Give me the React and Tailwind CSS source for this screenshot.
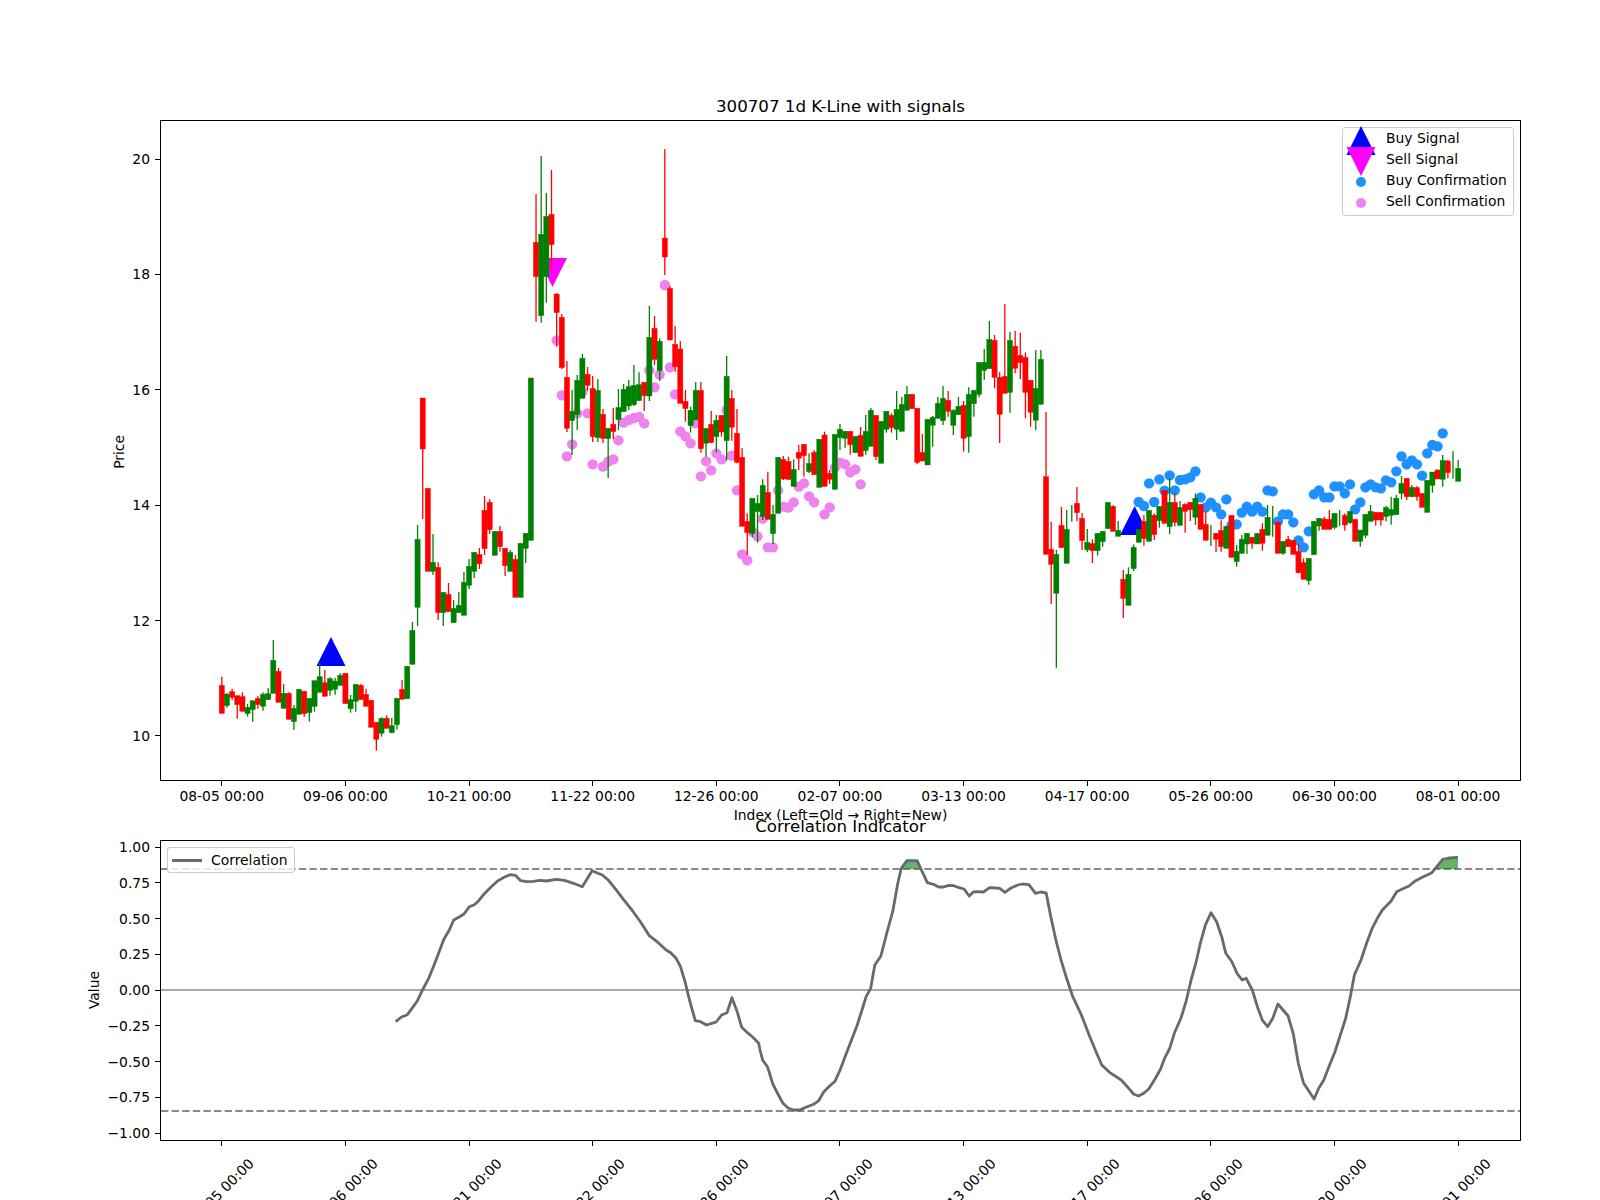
import React from 'react';

// x position of candle i in page pixels
const xOf = (i) => 221.8 + 5.1515 * i;

// Prices were read per crop, so each group has its own y origin (3 units = 1px)
const candleGroups = [
  { y0: 450, rows: [
    'r 680 706 790 790', 'g 730 732 767 773', 'r 716 725 742 750', 'r 737 737 764 806', 'r 727 740 784 784',
    'g 762 772 791 800', 'g 752 752 779 815', 'r 738 745 764 776', 'g 727 733 769 782', 'g 714 731 749 749',
    'g 570 631 730 730', 'r 654 664 757 757', 'g 702 730 775 775', 'r 727 730 808 808', 'g 765 775 815 840',
    'g 718 718 793 793', 'r 722 724 791 800', 'g 745 745 788 815', 'g 692 692 769 785', 'g 640 680 727 727',
    'r 660 698 739 739', 'g 682 686 721 737', 'g 683 693 718 734', 'g 670 676 706 706', 'r 670 670 761 761',
    'g 735 749 776 788', 'g 703 703 754 785', 'r 702 706 749 749', 'r 716 733 769 769', 'r 751 751 832 832',
    'r 817 817 868 902', 'g 802 805 850 860', 'r 796 805 835 835', 'g 803 827 848 850', 'g 745 745 824 839',
    'r 690 718 748 748', 'g 649 649 746 746', 'g 516 541 643 643', 'g 225 268 472 528', 'r -156 -156 -3 207',
    'r 115 115 364 364', 'g 252 337 364 375', 'r 337 352 488 510', 'g 427 427 488 528', 'r 399 433 485 485',
    'g 450 475 518 518', 'g 426 466 488 488', 'g 366 397 496 496', 'g 327 349 406 417', 'g 307 307 364 384',
    'r 294 313 341 357', 'r 138 181 296 315', 'r 148 157 239 252', 'g 244 244 316 316', 'r 228 244 290 305',
    'r 295 295 347 378', 'g 300 307 364 364', 'r 315 328 442 442', 'g 280 280 442 442', 'g 250 250 295 339',
    'g -216 -216 271 271',
  ] },
  { y0: 120, rows: [
    'r 222 367 470 605', 'g 108 343 587 608', 'g 219 289 470 548', 'r 150 283 374 446',
  ] },
  { y0: 280, rows: [
    'r 40 42 98 200', 'r 102 112 263 267', 'r 243 292 445 456', 'g 330 394 422 525', 'g 285 301 404 450',
    'g 222 235 355 355', 'r 261 283 316 332', 'r 288 325 470 486', 'g 297 331 473 486', 'r 387 403 475 489',
    'g 445 445 476 594', 'r 384 433 455 478', 'g 327 382 419 450', 'g 312 328 395 395', 'g 300 320 378 390',
    'g 255 316 374 378', 'g 277 314 362 362', 'r 307 307 347 393', 'g 78 172 348 363', 'r 108 145 238 255',
    'g 175 184 272 303', 'r -393 -126 -69 -15', 'r 18 25 180 180', 'r 138 193 260 275', 'r 183 207 370 370',
    'r 330 364 386 425', 'g 380 391 437 458', 'g 306 331 420 420', 'r 306 331 506 518', 'g 445 445 490 530',
    'r 393 433 488 490', 'g 405 421 470 517', 'r 406 406 456 470', 'g 228 289 482 542', 'r 330 355 442 482',
    'r 387 460 547 550', 'r 505 532 739 739', 'r 700 724 758 825', 'g 655 655 760 772', 'g 645 670 695 788',
    'g 598 616 710 720', 'r 575 637 718 718', 'g 675 703 761 792', 'g 532 532 700 700', 'r 528 538 597 600',
    'r 530 544 598 600', 'g 538 568 619 619', 'r 495 517 535 570', 'r 493 493 527 590', 'g 520 550 575 580',
    'r 510 517 584 584', 'g 478 478 622 622', 'r 455 465 619 619',
  ] },
  { y0: 280, rows: [
    'r 570 580 598 612', 'g 463 463 628 628', 'g 432 448 473 510', 'g 454 454 475 503', 'r 454 454 494 524',
    'g 469 469 518 518', 'r 441 466 529 529', 'g 405 454 512 524', 'g 384 391 499 499', 'r 406 406 530 540',
    'g 424 424 550 550', 'g 394 394 448 458', 'r 400 406 443 458', 'g 333 388 448 480', 'g 351 373 454 454',
    'g 318 343 391 391', 'r 343 343 386 386', 'r 385 385 547 553', 'r 462 517 543 543', 'g 418 418 555 555',
    'g 408 412 436 500', 'g 350 370 415 415', 'g 318 355 422 435', 'r 333 361 394 410', 'g 388 391 436 465',
    'g 351 379 404 404', 'r 363 376 475 515', 'g 322 343 470 518', 'g 331 331 371 410', 'g 247 247 343 352',
    'g 207 247 271 300', 'g 123 178 266 266', 'r 165 181 292 325', 'r 277 292 403 489', 'r 72 289 340 340',
    'g 156 181 337 398', 'r 153 199 265 280', 'r 158 226 248 297', 'r 217 232 337 415', 'r 301 301 397 440',
    'g 210 325 421 450', 'g 210 238 373 373',
  ] },
  { y0: 400, rows: [
    'r 36 230 463 463', 'r 366 448 493 612', 'g 450 463 580 803', 'r 321 376 443 443', 'g 330 388 490 490',
    'g 315 340 340 365', 'r 261 310 338 363', 'r 339 355 422 450', 'g 387 427 449 456', 'r 418 431 452 489',
    'g 400 400 452 467', 'g 394 394 425 440', 'g 307 307 386 386', 'r 316 319 394 394', 'g 363 391 409 409',
    'r 510 538 595 654', 'g 502 523 616 616', 'g 433 442 506 513', 'g 388 388 427 427', 'r 345 364 416 437',
    'g 331 331 424 424', 'r 340 346 404 420', 'g 319 319 362 383', 'r 271 271 370 370', 'g 235 307 380 402',
    'r 280 307 367 379', 'g 303 322 376 376', 'r 310 313 334 398', 'r 307 307 329 363', 'g 280 295 352 375',
    'r 313 313 388 388', 'r 333 373 421 421', 'g 375 406 406 438', 'r 400 400 418 456', 'r 361 391 440 455',
    'g 379 379 445 445', 'r 346 346 472 472',
  ] },
  { y0: 120, rows: [
    'g 1275 1294 1325 1340', 'g 1245 1258 1300 1300', 'g 1240 1240 1272 1302', 'r 1252 1252 1270 1286', 'g 1240 1240 1272 1272',
    'r 1210 1228 1270 1292', 'g 1155 1192 1246 1246', 'g 1158 1204 1204 1250', 'r 1206 1206 1300 1300', 'g 1264 1264 1300 1304',
    'r 1248 1258 1280 1280', 'r 1261 1261 1303 1303', 'r 1272 1294 1358 1360', 'r 1315 1328 1378 1378', 'g 1315 1315 1382 1394',
    'g 1204 1204 1304 1304', 'g 1195 1195 1218 1232', 'r 1190 1197 1228 1228', 'r 1170 1198 1228 1228', 'g 1180 1180 1222 1228',
    'g 1170 1194 1194 1218', 'r 1180 1186 1215 1232', 'g 1174 1174 1208 1212', 'r 1198 1198 1264 1264', 'g 1230 1230 1264 1280',
    'g 1183 1183 1246 1254', 'g 1155 1174 1204 1204', 'r 1177 1177 1200 1217', 'r 1177 1177 1200 1217', 'g 1158 1162 1190 1204',
    'g 1130 1168 1186 1214', 'g 1125 1135 1184 1184', 'g 1068 1090 1120 1138', 'r 1075 1075 1130 1140', 'g 1095 1102 1130 1132',
    'r 1098 1103 1130 1142', 'r 1120 1120 1162 1162', 'g 1081 1081 1177 1177', 'g 1056 1056 1096 1118', 'r 1048 1050 1077 1077',
    'g 1005 1021 1078 1100', 'r 1020 1023 1058 1075', 'g 993 1035 1035 1076', 'g 1020 1045 1084 1084',
  ] },
];

const candles = candleGroups.flatMap(({ y0, rows }) =>
  rows.map((row) => {
    const [color, ...ys] = row.split(' ');
    const [wickTop, bodyTop, bodyBottom, wickBottom] = ys.map((v) => y0 + Number(v) / 3);
    return { color: color === 'r' ? '#ff0000' : '#008000', wickTop, bodyTop, bodyBottom, wickBottom };
  })
);

// [candle index, y] pairs, y in crop units
const sellDots = [
  [65, 181], [66, 346], [67, 529], [68, 493], [69, 400], [70, 335], [71, 400], [72, 553], [74, 560], [75, 545],
  [76, 538], [77, 481], [78, 428], [79, 420], [80, 414], [81, 411], [82, 430], [83, 271], [84, 322], [85, 284],
  [86, 15], [87, 262], [88, 343], [89, 454], [90, 469], [91, 490], [92, 430], [93, 589], [94, 544], [95, 571],
  [96, 520], [97, 538], [98, 390], [99, 527], [100, 631], [101, 823], [102, 841], [103, 755], [104, 769], [105, 716],
  [106, 802], [107, 802], [108, 631], [109, 680], [110, 683], [111, 667], [112, 620], [113, 610], [114, 649], [115, 667],
  [117, 703], [118, 682], [119, 563], [120, 548], [121, 553], [122, 577], [123, 568], [124, 613],
].map(([i, y]) => [xOf(i), 280 + y / 3]);

const buyDots = [
  ...[
    [178, 306], [179, 318], [180, 250], [181, 306], [182, 238], [183, 272], [184, 226], [185, 271], [186, 240], [187, 238],
    [188, 232], [189, 214], [190, 292], [191, 322], [192, 308], [193, 322], [194, 343], [195, 298], [196, 376],
  ].map(([i, y]) => [xOf(i), 400 + y / 3]),
  ...[
    [197, 1213], [198, 1178], [199, 1160], [200, 1175], [201, 1160], [202, 1175], [203, 1111], [204, 1114], [205, 1204], [206, 1183],
    [207, 1183], [208, 1207], [209, 1261], [210, 1282], [211, 1234], [212, 1123], [213, 1111], [214, 1132], [215, 1132], [216, 1099],
    [217, 1099], [218, 1120], [219, 1093], [220, 1168], [221, 1147], [222, 1102], [223, 1093], [224, 1102], [225, 1105], [226, 1081],
    [227, 1087], [228, 1054], [229, 1009], [230, 1033], [231, 1021], [232, 1033], [233, 1067], [234, 1000], [235, 975], [236, 979],
    [237, 940],
  ].map(([i, y]) => [xOf(i), 120 + y / 3]),
];

const corrLeft = [
  [752, 755], [765, 741], [778, 734], [788, 716], [800, 694], [812, 660], [826, 625], [838, 585], [848, 550], [860, 508],
  [872, 480], [882, 450], [895, 440], [905, 432], [917, 410], [928, 404], [938, 392], [950, 372], [965, 352], [980, 333],
  [995, 322], [1008, 314], [1020, 316], [1032, 332], [1045, 335], [1060, 334], [1075, 331], [1090, 333], [1112, 328], [1130, 331],
  [1150, 340], [1170, 350], [1192, 302], [1205, 310], [1215, 315], [1228, 330], [1245, 358], [1262, 388], [1280, 418], [1300, 455],
  [1320, 497], [1340, 518], [1358, 540], [1368, 548], [1380, 565], [1390, 590], [1400, 635], [1410, 690], [1423, 752], [1435, 755],
  [1448, 765], [1460, 760], [1470, 756], [1482, 735], [1494, 728], [1505, 683], [1517, 725], [1527, 772], [1540, 788], [1552, 802],
  [1565, 820],
].map(([x, y]) => [60 + x / 2.24, 770 + y / 3]);

const corrRight = [
  [0, 840], [5, 870], [15, 892], [25, 942], [35, 972], [45, 1000], [55, 1014], [65, 1020], [78, 1020], [90, 1012],
  [105, 1003], [115, 992], [125, 965], [135, 950], [147, 934], [157, 900], [168, 855], [178, 815], [190, 768], [200, 720],
  [208, 680], [217, 655], [225, 585], [237, 558], [250, 480], [260, 425], [270, 340], [277, 295], [288, 272], [308, 272],
  [315, 295], [328, 338], [340, 343], [350, 351], [360, 351], [370, 346], [380, 347], [390, 353], [400, 357], [410, 378],
  [418, 366], [428, 365], [438, 366], [450, 353], [462, 354], [470, 355], [480, 367], [492, 354], [505, 345], [515, 342],
  [527, 344], [540, 370], [550, 366], [561, 369], [570, 440], [580, 510], [590, 570], [600, 620], [613, 680], [630, 735],
  [645, 795], [660, 850], [670, 885], [685, 907], [708, 930], [720, 950], [732, 972], [742, 978], [752, 970], [762, 957],
  [775, 925], [785, 898], [793, 865], [803, 835], [812, 790], [825, 745], [835, 695], [845, 630], [855, 575], [863, 520],
  [873, 465], [884, 428], [895, 455], [905, 500], [913, 550], [925, 575], [935, 610], [945, 630], [953, 625], [965, 660],
  [975, 710], [985, 752], [995, 770], [1005, 745], [1015, 702], [1035, 738], [1045, 790], [1055, 880], [1065, 938], [1086, 987],
  [1095, 955], [1105, 930], [1115, 890], [1127, 845], [1148, 745], [1157, 680], [1165, 615], [1178, 570], [1190, 515], [1200, 475],
  [1210, 445], [1220, 420], [1237, 393], [1248, 365], [1258, 358], [1272, 348], [1285, 332], [1300, 320], [1317, 308], [1338, 268],
  [1350, 264], [1368, 262],
].map(([x, y]) => [760 + x / 1.96, 770 + y / 3]);

const toPoints = (pts) => pts.map(([x, y]) => `${x.toFixed(1)},${y.toFixed(1)}`).join(' ');
const rightPt = (x, y) => `${(760 + x / 1.96).toFixed(1)},${(770 + y / 3).toFixed(1)}`;

const dateLabels = ['08-05 00:00', '09-06 00:00', '10-21 00:00', '11-22 00:00', '12-26 00:00', '02-07 00:00', '03-13 00:00', '04-17 00:00', '05-26 00:00', '06-30 00:00', '08-01 00:00'];
const priceLabels = ['20', '18', '16', '14', '12', '10'];
const valueLabels = ['1.00', '0.75', '0.50', '0.25', '0.00', '−0.25', '−0.50', '−0.75', '−1.00'];

const triangle = (x, top, bottom, halfWidth) => `${x},${top} ${x + halfWidth},${bottom} ${x - halfWidth},${bottom}`;

const CandleChart = () => (
  <svg viewBox="161 121 1359 659" className="block w-[1359px] h-[659px]">
    <polygon points={triangle(xOf(21) + 1, 637, 666, 14.5)} fill="#0000ff" />
    <polygon points={triangle(xOf(177) + 1, 506, 535, 14.5)} fill="#0000ff" />
    <polygon points={triangle(xOf(64) + 1, 287, 258, 14.5)} fill="#ff00ff" />
    {sellDots.map(([x, y], i) => <circle key={i} cx={x} cy={y} r="5.2" fill="#ee82ee" />)}
    {buyDots.map(([x, y], i) => <circle key={i} cx={x} cy={y} r="5.2" fill="#1e90ff" />)}
    {candles.map((c, i) => (
      <g key={i} fill={c.color} stroke={c.color}>
        <line x1={xOf(i)} x2={xOf(i)} y1={c.wickTop} y2={c.wickBottom} strokeWidth="1.3" />
        <rect x={xOf(i) - 2.6} y={c.bodyTop} width="5.2" height={c.bodyBottom - c.bodyTop} strokeWidth="0.4" />
      </g>
    ))}
  </svg>
);

const CorrChart = () => (
  <svg viewBox="161 841 1359 299" className="block w-[1359px] h-[299px]">
    <line x1="161" x2="1520" y1="869" y2="869" stroke="#8a8a8a" strokeWidth="2" strokeDasharray="7.4 3.2" />
    <line x1="161" x2="1520" y1="1111" y2="1111" stroke="#8a8a8a" strokeWidth="2" strokeDasharray="7.4 3.2" />
    <line x1="161" x2="1520" y1="990" y2="990" stroke="#a9a9a9" strokeWidth="2" />
    <polygon points={[rightPt(277, 297), rightPt(288, 272), rightPt(308, 272), rightPt(315, 297)].join(' ')} fill="#008000" fillOpacity="0.6" />
    <polygon points={[rightPt(1322, 297), rightPt(1338, 268), rightPt(1350, 264), rightPt(1368, 262), rightPt(1368, 297)].join(' ')} fill="#008000" fillOpacity="0.6" />
    <polyline points={toPoints([...corrLeft, ...corrRight])} fill="none" stroke="#696969" strokeWidth="2.8" strokeLinejoin="round" />
  </svg>
);

const Legend = ({ className, children }) => (
  <div className={`absolute rounded-[3px] border border-[#cccccc] bg-white/80 ${className}`}>{children}</div>
);

const LegendRow = ({ label, children }) => (
  <div className="flex items-center h-[21px]">
    <div className="w-[43px] shrink-0" />
    <span className="whitespace-nowrap">{label}</span>
    {children}
  </div>
);

const YTicks = ({ labels, topPad, gap, label, labelWidth }) => (
  <div className="w-[160px] shrink-0 flex">
    <div className={`shrink-0 flex items-center justify-end ${labelWidth}`}>
      <span className="[writing-mode:vertical-rl] rotate-180 leading-none">{label}</span>
    </div>
    <div className={`flex-1 flex flex-col ${topPad} ${gap}`}>
      {labels.map((t) => (
        <div key={t} className="h-4 flex items-center justify-end gap-[5px]">
          <span className="leading-4">{t}</span>
          <div className="w-[5px] h-px bg-black" />
        </div>
      ))}
    </div>
  </div>
);

export default function App() {
  return (
    <div className="relative w-[1600px] h-[1200px] overflow-hidden bg-white text-black text-[13.89px] font-['DejaVu_Sans',sans-serif]">
      <div className="h-[120px] w-[1361px] ml-[160px] flex items-end justify-center pb-[4px]">
        <span className="text-[16.67px] leading-[18px]">300707 1d K-Line with signals</span>
      </div>

      <div className="flex">
        <YTicks labels={priceLabels} topPad="pt-[31px]" gap="gap-[99.4px]" label="Price" labelWidth="w-[127px] pt-[3px]" />
        <div className="relative w-[1361px] h-[661px] border border-black">
          <CandleChart />
          <Legend className="left-[1181px] top-[6px] w-[172px] h-[89px]">
            <svg viewBox="0 0 44 60" className="absolute left-[-4px] top-[-3px] w-[44px] h-[60px]">
              <polygon points="22,1 36.5,30 7.5,30" fill="#0000ff" />
              <polygon points="22,51 36.5,22 7.5,22" fill="#ff00ff" />
            </svg>
            <LegendRow label="Buy Signal" />
            <LegendRow label="Sell Signal" />
            <LegendRow label="Buy Confirmation">
              <div className="absolute left-[13px] w-[10px] h-[10px] rounded-full bg-[#1e90ff] mt-[3px]" />
            </LegendRow>
            <LegendRow label="Sell Confirmation">
              <div className="absolute left-[13px] w-[10px] h-[10px] rounded-full bg-[#ee82ee] mt-[3px]" />
            </LegendRow>
          </Legend>
        </div>
      </div>

      <div className="flex ml-[160px]">
        {dateLabels.map((d) => (
          <div key={d} className="w-[123.64px] shrink-0 flex flex-col items-center">
            <div className="w-px h-[5px] bg-black" />
            <span className="mt-[2px] leading-[16px] whitespace-nowrap">{d}</span>
          </div>
        ))}
      </div>

      <div className="h-[15px] mt-[4px] w-[1361px] ml-[160px] flex items-center justify-center leading-[15px]">
        Index (Left=Old → Right=New)
      </div>
      <div className="-mt-[5px] h-[18px] w-[1361px] ml-[160px] flex items-center justify-center text-[16.67px] leading-[18px]">
        Correlation Indicator
      </div>
      <div className="h-[4px]" />

      <div className="flex">
        <YTicks labels={valueLabels} topPad="-mt-[1px]" gap="gap-[19.75px]" label="Value" labelWidth="w-[102px]" />
        <div className="relative w-[1361px] h-[301px] border border-black">
          <CorrChart />
          <Legend className="left-[6px] top-[6px] w-[128px] h-[26px] flex items-center">
            <div className="ml-[4px] w-[30px] h-[3px] bg-[#696969] shrink-0" />
            <span className="ml-[9px] whitespace-nowrap">Correlation</span>
          </Legend>
        </div>
      </div>

      <div className="flex ml-[160px]">
        {dateLabels.map((d) => (
          <div key={d} className="w-[123.64px] shrink-0 flex flex-col items-center">
            <div className="w-px h-[5px] bg-black" />
            <span className="mt-[37px] leading-[16px] whitespace-nowrap -rotate-45">{d}</span>
          </div>
        ))}
      </div>
    </div>
  );
}
